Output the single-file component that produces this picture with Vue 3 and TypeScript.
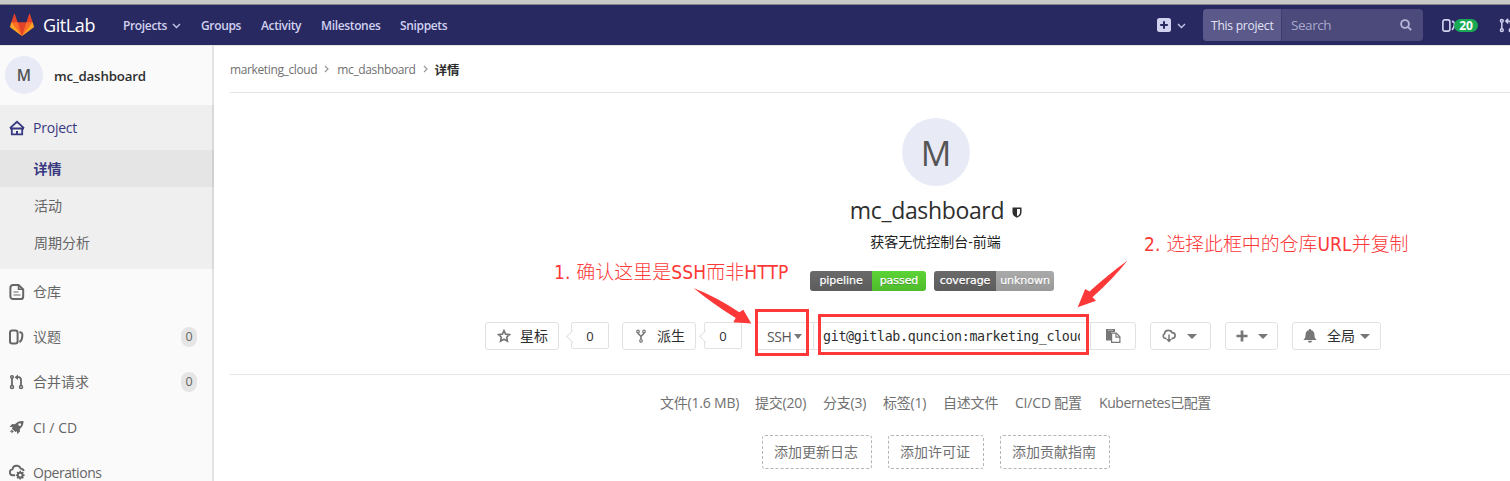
<script setup lang="ts">
interface NavItem {
  label: string
  icon: string
  count?: number
}

const sections: NavItem[] = [
  { label: '仓库', icon: 'doc' },
  { label: '议题', icon: 'issues', count: 0 },
  { label: '合并请求', icon: 'merge', count: 0 },
  { label: 'CI / CD', icon: 'rocket' },
  { label: 'Operations', icon: 'cloud' },
]
const stats: string[] = ['文件(1.6 MB)', '提交(20)', '分支(3)', '标签(1)', '自述文件', 'CI/CD 配置', 'Kubernetes已配置']
const suggestions: string[] = ['添加更新日志', '添加许可证', '添加贡献指南']
</script>

<template>
  <div class="page">
    <div class="chrome-edge"></div>
    <header class="navbar">
      <svg class="tanuki" viewBox="0 0 36 36">
        <path fill="#e24329" d="M2 14l9.38 9v-9l-4-12.28c-.205-.632-1.176-.632-1.38 0z" />
        <path fill="#e24329" d="M34 14l-9.38 9v-9l4-12.28c.205-.632 1.176-.632 1.38 0z" />
        <path fill="#e24329" d="M18 34.38L3 14h30z" />
        <path fill="#fc6d26" d="M18 34.38L11.38 14H2l4 11zM18 34.38L24.62 14H34l-4 11z" />
        <path fill="#fca326" d="M2 14L.1 20.16c-.18.565 0 1.2.5 1.56L18 34.38zM34 14l1.9 6.16c.18.565 0 1.2-.5 1.56L18 34.38z" />
      </svg>
      <span class="wordmark">GitLab</span>
      <nav class="links">
        <a>Projects<svg class="chev" viewBox="0 0 9 6"><path d="M1 1l3.5 3.5L8 1" /></svg></a>
        <a>Groups</a><a>Activity</a><a>Milestones</a><a>Snippets</a>
      </nav>
      <div class="new-menu">
        <svg class="plus-square" viewBox="0 0 14 14">
          <rect width="14" height="14" rx="2.5" fill="#d1d1f0" />
          <path d="M7 3.2v7.6M3.2 7h7.6" stroke="#292961" stroke-width="2" />
        </svg>
        <svg class="chev" viewBox="0 0 9 6"><path d="M1 1l3.5 3.5L8 1" /></svg>
      </div>
      <div class="search">
        <span class="scope">This project</span>
        <span class="placeholder">Search</span>
        <svg class="lens" viewBox="0 0 12 12"><circle cx="5" cy="5" r="3.9" /><path d="M7.9 7.9L11.2 11.2" /></svg>
      </div>
      <svg class="nav-issues" viewBox="0 0 16 16"><rect x="1" y="1.5" width="8" height="13" rx="2.2" /><path d="M11.5 3c2.6 1.2 3 1.8 2.7 4.2-.2 2.4-.9 4-2.7 6" /></svg>
      <span class="todo-count">20</span>
      <svg class="nav-merge" viewBox="0 0 16 16"><circle cx="3" cy="3" r="1.5" /><circle cx="3" cy="13" r="1.5" /><circle cx="12.5" cy="13" r="1.5" /><path d="M3 4.5v7M12.5 11.5V6q0-2.7-2.5-2.7H8M9.8.9L7.3 3.3l2.5 2.4" /></svg>
    </header>

    <div class="body">
      <aside class="sidebar">
        <div class="context"><span class="avatar small">M</span><span class="context-name">mc_dashboard</span></div>
        <div class="open-section">
          <div class="row project">
            <svg class="icon" viewBox="0 0 16 16"><path d="M1 8.2L8 1.8l7 6.4M2.8 8v6.3h10.4V8M1 8.5h14" stroke-width="1.8" /><path d="M8 11v3" stroke-width="2" /></svg>
            <span>Project</span>
          </div>
          <div class="sub current">详情</div>
          <div class="sub">活动</div>
          <div class="sub">周期分析</div>
        </div>
        <div v-for="item in sections" :key="item.icon" class="row">
          <svg class="icon" viewBox="0 0 16 16">
            <template v-if="item.icon === 'doc'">
              <path d="M9.5 1H4a2.600 2.600 0 0 0-2.600 2.600v8.800A2.600 2.600 0 0 0 4 15h7.600a2.600 2.600 0 0 0 2.600-2.600V5.500z" stroke-width="2" />
              <path d="M9.500 1v4.300h4.400" stroke-width="1.500" /><path d="M4.500 8h5M4.500 11h7" stroke-width="1.200" />
            </template>
            <template v-else-if="item.icon === 'issues'">
              <rect x="1" y="1.600" width="7.600" height="12.800" rx="2.200" stroke-width="2" />
              <path d="M10.500 3c2.800.7 3 1.500 2.800 4.200-.1 2.500-.7 4.500-2.800 6" stroke-width="2" />
            </template>
            <template v-else-if="item.icon === 'merge'">
              <g stroke-width="1.500"><circle cx="3" cy="3" r="1.300" /><circle cx="3" cy="13" r="1.500" /><circle cx="12" cy="13" r="1.500" /></g>
              <path d="M3 4v7.500M12 11.500V6q0-2.800-2.500-2.800H7.500" stroke-width="1.800" /><path class="solid" d="M9 .5v5.400L5.600 3.200z" />
            </template>
            <template v-else-if="item.icon === 'rocket'">
              <path class="solid" d="M14.500 2C10.600 1.700 8 3 5.800 5.200L3.200 5 .5 8l3.200.1-.8 1.700L6.400 13l1.600-.8.2 3.100 2.800-2.700-.2-2.600c2.500-2 3.900-4.400 3.700-8zM10.700 7a1.400 1.400 0 1 1 0-2.800 1.400 1.400 0 0 1 0 2.800zM2.600 10.700L.7 13l2-.5-.5 2.100 2.600-2z" />
            </template>
            <template v-else>
              <path d="M6 11.200H4A2.900 2.900 0 0 1 3.500 5.400C4 2.500 6.200 1.500 8.300 1.800c2 .3 3 1.500 3.500 2.800 1.600.1 2.600 1 3 2.400" stroke-width="1.900" />
              <circle cx="11.200" cy="11.200" r="2.400" stroke-width="2" /><path d="M11.200 6.800v2M11.200 13.600v2M6.800 11.200h2M13.600 11.200h2M8.100 8.100l1.400 1.400M12.900 12.900l1.400 1.400M14.300 8.100l-1.400 1.400M9.500 12.900l-1.400 1.400" stroke-width="1.600" />
            </template>
          </svg>
          <span :class="item.icon">{{ item.label }}</span>
          <span v-if="item.count !== undefined" class="count-pill">{{ item.count }}</span>
        </div>
      </aside>

      <main class="content">
        <div class="crumbs">
          <span>marketing_cloud</span><svg viewBox="0 0 5 8"><path d="M1 1l3 3-3 3" /></svg>
          <span>mc_dashboard</span><svg viewBox="0 0 5 8"><path d="M1 1l3 3-3 3" /></svg>
          <strong>详情</strong>
        </div>
        <section class="home">
          <span class="avatar large">M</span>
          <h1>mc_dashboard<svg class="shield" viewBox="0 0 10 11"><path fill="#2e2e2e" fill-rule="evenodd" d="M.5.5h9v5C9.500 8 7.500 9.700 5 10.800 2.500 9.700.5 8 .5 5.500zM5 2v7.200C7 8.200 8 7 8 5.500V2z" /></svg></h1>
          <p class="about">获客无忧控制台-前端</p>
          <div class="badges">
            <span class="badge"><i class="pipe">pipeline</i><i class="passed">passed</i></span>
            <span class="badge"><i class="cover">coverage</i><i class="unknown">unknown</i></span>
          </div>
          <div class="actions">
            <span class="btn star"><svg viewBox="0 0 14 14"><path d="M7 1.600l1.600 3.500 3.900.5-2.800 2.600.7 3.900L7 10.200l-3.400 1.900.7-3.900L1.500 5.600l3.900-.5z" fill="none" stroke="#777" stroke-width="1.700" /></svg><span>星标</span></span>
            <span class="tally first">0</span>
            <span class="btn fork"><svg viewBox="0 0 14 14"><g fill="none" stroke="#777" stroke-width="1.200"><circle cx="4" cy="2.400" r="1.300" /><circle cx="10" cy="2.400" r="1.300" /><circle cx="7" cy="11.800" r="1.300" /><path d="M4 3.700c0 2 3 2.300 3 4.300v2.500M10 3.700c0 2-3 2.300-3 4.300" stroke-width="1.600" /></g></svg><span>派生</span></span>
            <span class="tally second">0</span>
            <div class="clone">
              <span class="protocol">SSH<b class="caret"></b></span>
              <span class="url"><span>git@gitlab.quncion:marketing_cloud</span></span>
              <span class="copy"><svg viewBox="0 0 15 14"><path fill="#777" d="M0 0h9v3H5v8.500H0z" /><path d="M5.600 4.200h4.700l3.600 3.600v5.600H5.600z" fill="#fff" stroke="#777" stroke-width="1.200" /><path d="M10 4.200v4h4" fill="none" stroke="#777" stroke-width="1.200" /><path d="M2 1.300h5" stroke="#bbb" /></svg></span>
            </div>
            <span class="btn download"><svg viewBox="0 0 14 14"><path d="M4.500 9.300H3.200A2.400 2.400 0 0 1 2.500 4.800C2.800 2.500 4.500 1.300 6.600 1.400c1.800 0 3 .9 3.500 2.300 2 0 3 1.200 3 2.800 0 1.500-1 2.700-2.700 2.800H9.500" fill="none" stroke="#777" stroke-width="1.700" /><path d="M7 5.500v6" stroke="#777" stroke-width="1.500" /><path fill="#777" d="M4 10h6l-3 3.500z" /></svg><b class="caret"></b></span>
            <span class="btn add"><svg viewBox="0 0 12 12"><path d="M6 .5v11M.5 6h11" stroke="#777" stroke-width="2.700" /></svg><b class="caret"></b></span>
            <span class="btn notify"><svg viewBox="0 0 14 14"><path fill="#777" d="M7 0c.8 0 1.200.5 1.200 1.200C10.500 1.700 11.500 3.500 11.500 6c0 2.500.8 3.600 2.200 5H.3C1.700 9.600 2.500 8.500 2.500 6c0-2.500 1-4.300 3.300-4.800C5.800.5 6.200 0 7 0zM5 11.800h4c0 1.200-.9 2-2 2s-2-.8-2-2z" /></svg><span>全局</span><b class="caret"></b></span>
          </div>
        </section>
        <section class="facts">
          <div class="stats"><span v-for="s in stats" :key="s">{{ s }}</span></div>
          <div class="suggestions"><span v-for="s in suggestions" :key="s">{{ s }}</span></div>
        </section>
      </main>
    </div>

    <div class="frame frame-ssh"></div>
    <div class="frame frame-url"></div>
    <span class="note note-one"><b>1. </b>确认这里是<b>SSH</b>而非<b>HTTP</b></span>
    <span class="note note-two"><b>2. </b>选择此框中的仓库<b>URL</b>并复制</span>
    <svg class="arrows" viewBox="0 0 1510 481">
      <path d="M693.500 288q23 9 45.800 24.300l4-2.600 8 13.800-18-1.200 2.400-4.300Q713 304 693.500 288z" />
      <path d="M1127.300 260.800Q1109 274 1089.500 291.500l-4.300-2.500-7.500 18.200 18.300-6.400-3.500-3.600Q1113 279 1127.300 260.800z" />
    </svg>
  </div>
</template>

<style>
body { overflow: hidden; }
</style>

<style scoped>
.page, .page * { box-sizing: border-box; }
.page { position: relative; width: 1510px; height: 481px; overflow: hidden; background: #fff; color: #2e2e2e; font: 14px "Open Sans", "Noto Sans CJK SC", sans-serif; white-space: nowrap; }
.chrome-edge { height: 5px; background: #c8c8c8; border-bottom: 1px solid #858585; }
.navbar { height: 40px; background: #292961; display: flex; align-items: center; color: #d1d1f0; }
.navbar > * { flex: none; }
.tanuki { width: 24px; height: 24px; margin-left: 10px; }
.wordmark { width: 80px; margin-left: 9px; color: #fff; font-size: 18px; letter-spacing: -.4px; }
.links { display: grid; grid-template-columns: 78px 60px 60px 79px 60px; width: 337px; font-size: 12px; font-weight: 600; letter-spacing: -.35px; }
.links a { display: flex; align-items: center; padding-top: 1px; }
.chev { width: 9px; height: 6px; fill: none; stroke: #c4c4e6; stroke-width: 1.4; }
.links .chev { margin: 1px 0 0 5px; }
.new-menu { width: 46px; margin-left: 697px; display: flex; align-items: center; gap: 6px; }
.new-menu .chev { margin-top: 2px; }
.plus-square { width: 14px; height: 14px; }
.search { width: 220px; height: 32px; display: flex; align-items: center; border-radius: 4px; overflow: hidden; background: #4b4a7b; }
.scope { width: 79px; height: 32px; padding-left: 8px; line-height: 33px; border-right: 1px solid #3d3c73; background: #5a5989; color: #e4e4f7; font-size: 12px; letter-spacing: -.22px; }
.placeholder { width: 109px; margin-left: 9px; font-size: 13.500px; line-height: 34px; letter-spacing: -.45px; color: #a9a8cc; }
.lens { width: 12px; height: 12px; fill: none; stroke: #b6b5d8; stroke-width: 1.9; }
.nav-issues { width: 14px; height: 15px; margin-left: 19px; fill: none; stroke: #d1d1f0; stroke-width: 1.9; }
.todo-count { width: 24px; height: 13px; margin-left: -2px; border-radius: 7px; background: #1aaa55; color: #fff; font-size: 12px; font-weight: 700; line-height: 13px; text-align: center; }
.nav-merge { width: 15px; height: 15px; margin-left: 21px; fill: none; stroke: #d1d1f0; stroke-width: 1.6; }

.body { height: 436px; display: flex; border-top: 1px solid #e5e5e5; }
.sidebar { position: relative; flex: none; width: 214px; background: #fafafa; color: #666; font-size: 14px; }
.sidebar::after { content: ""; position: absolute; top: 0; right: 0; width: 2px; height: 100%; background: rgba(0, 0, 0, .09); }
.context { height: 59px; display: flex; align-items: center; padding: 0 0 2px 5px; gap: 11px; }
.avatar { display: flex; align-items: center; justify-content: center; border-radius: 50%; background: #e8eaf6; color: #555; }
.avatar.small { width: 38px; height: 38px; font-size: 15.500px; font-weight: 600; }
.context-name { padding-top: 2px; color: #2e2e2e; font-size: 13.300px; font-weight: 600; letter-spacing: -.17px; }
.open-section { height: 164px; background: #efefef; }
.row { height: 45px; display: flex; align-items: center; padding: 0 17px 0 9px; font-size: 14px; }
.row > span { margin-bottom: 1px; }
.icon { width: 16px; height: 16px; margin-right: 8px; fill: none; stroke: #666; }
.icon .solid { fill: #666; stroke: none; }
.project { color: #393982; letter-spacing: -.22px; }
.project > span { margin-bottom: 0; }
.project .icon { stroke: #393982; }
.row > .rocket { margin: 1px 0 0; letter-spacing: 0; }
.row > .cloud { margin: 1px 0 0; letter-spacing: -.45px; }
.row > .count-pill { margin: 0 0 0 auto; width: 16px; height: 20px; border-radius: 10px; background: #e5e5e5; font-size: 12.500px; line-height: 20px; text-align: center; }
.sub { height: 37px; padding-left: 34px; line-height: 37px; }
.current { padding-left: 33.500px; background: #e5e5e5; color: #393982; font-weight: 700; }

.content { flex: none; width: 1412px; margin-left: 16px; }
.crumbs { height: 47px; display: flex; align-items: center; border-bottom: 1px solid #e5e5e5; color: #707070; font-size: 12px; letter-spacing: -.37px; }
.crumbs svg { width: 5px; height: 8px; margin: 0 8px 0 7px; fill: none; stroke: #999; stroke-width: 1.200; }
.crumbs strong { margin-left: -1px; color: #2e2e2e; font-size: 12.500px; letter-spacing: 0; }
.home { height: 282px; padding-top: 25px; display: flex; flex-direction: column; align-items: center; border-bottom: 1px solid #e5e5e5; }
.avatar.large { flex: none; width: 68px; height: 68px; padding-top: 1px; font-size: 34px; }
h1 { height: 30px; margin: 9px 0 1px; display: flex; align-items: center; font-size: 23px; font-weight: 400; letter-spacing: -.35px; line-height: 30px; }
.shield { width: 10px; height: 11px; margin: 4px 0 0 8px; }
.about { height: 24px; margin: 4px 1px 0 0; color: #222; font-size: 14px; line-height: 24px; }
.badges { display: flex; gap: 8px; margin: 17px 8px 0 0; }
.badge { height: 20px; display: flex; border-radius: 3px; overflow: hidden; }
.badge i { height: 20px; background: linear-gradient(#6a6a6a, #5c5c5c); color: #fff; font: 11px/20px "DejaVu Sans", sans-serif; text-align: center; text-shadow: 0 1px #0005; -webkit-text-stroke: .25px #fff; letter-spacing: -.05px; }
.badge .pipe, .badge .cover { width: 62px; }
.badge .passed { width: 54px; background: linear-gradient(#5bd336, #4fbd2b); }
.badge .unknown { width: 58px; background: linear-gradient(#aaa, #999); }
.actions { display: flex; margin: 31px 6px 0 0; height: 28px; }
.btn { height: 28px; display: flex; align-items: center; border: 1px solid #e2e2e2; border-radius: 3px; background: #fff; }
.btn svg { width: 14px; height: 14px; }
.btn > span { padding-bottom: 2px; }
.star { width: 74px; padding-left: 11px; gap: 9px; }
.fork { width: 74px; padding-left: 11px; gap: 9px; margin-left: 13px; }
.tally { position: relative; width: 38px; height: 27px; border: 1px solid #e2e2e2; border-radius: 2px; text-align: center; line-height: 26px; font-size: 13px; }
.tally::before { content: ""; position: absolute; left: -4.500px; top: 9px; width: 8px; height: 8px; border-left: 1px solid #e2e2e2; border-bottom: 1px solid #e2e2e2; background: #fff; transform: rotate(45deg); }
.first { margin-left: 12px; }
.second { margin-left: 8px; }
.clone { width: 380px; height: 28px; margin-left: 14px; display: flex; border: 1px solid #e2e2e2; border-radius: 3px; }
.protocol { width: 57px; padding-left: 10px; display: flex; align-items: center; gap: 3px; border-right: 1px solid #e2e2e2; color: #555; font-size: 14px; letter-spacing: -.4px; }
.caret { border: 5px solid transparent; border-top-color: #777; border-bottom: 0; }
.protocol .caret { border-width: 5px 4.500px 0; }
.url { width: 277px; padding: 0 10px 0 9px; border-right: 1px solid #e2e2e2; font: 13.300px/27px "DejaVu Sans Mono", monospace; letter-spacing: -.3px; color: #2e2e2e; }
.url span { display: block; overflow: hidden; }
.copy { flex: 1; display: flex; align-items: center; padding-left: 15px; }
.copy svg { width: 15px; height: 14px; }
.download { width: 61px; margin-left: 14px; padding-left: 11px; gap: 11px; }
.add { width: 53px; margin-left: 14px; padding-left: 10px; gap: 10px; }
.btn.add svg { width: 12px; height: 12px; }
.notify { width: 89px; margin-left: 14px; padding-left: 10px; gap: 10px; }
.notify .caret { margin-left: -5px; }
.facts { display: flex; flex-direction: column; align-items: center; color: #707070; }
.stats { height: 53px; margin-right: 1px; display: grid; grid-template-columns: 95px 68px 60px 60px 72px 84px 112px; align-items: center; font-size: 14px; letter-spacing: -.2px; }
.stats span:last-child { letter-spacing: -.41px; }
.suggestions { display: flex; gap: 16px; margin-top: 7px; }
.suggestions span { width: 110px; height: 34px; padding-left: 11px; border: 1px dashed #b5b5b5; border-radius: 3px; line-height: 32px; }
.suggestions span:nth-child(2) { width: 96px; }

.frame { position: absolute; border: 3px solid #fd3838; }
.frame-ssh { left: 755px; top: 309px; width: 54px; height: 47px; }
.frame-url { left: 818px; top: 314px; width: 271px; height: 41px; }
.note { position: absolute; color: #fd3838; font: 300 19px/24px "Noto Sans CJK SC", sans-serif; }
.note b { font-family: "DejaVu Sans Condensed", "DejaVu Sans", sans-serif; font-weight: 400; font-stretch: 90%; letter-spacing: .15px; white-space: pre; }
.note-one { left: 554px; top: 259px; }
.note-two { left: 1144px; top: 231px; letter-spacing: -.1px; }
.arrows { position: absolute; left: 0; top: 0; width: 1510px; height: 481px; fill: #fd3838; pointer-events: none; }
</style>
